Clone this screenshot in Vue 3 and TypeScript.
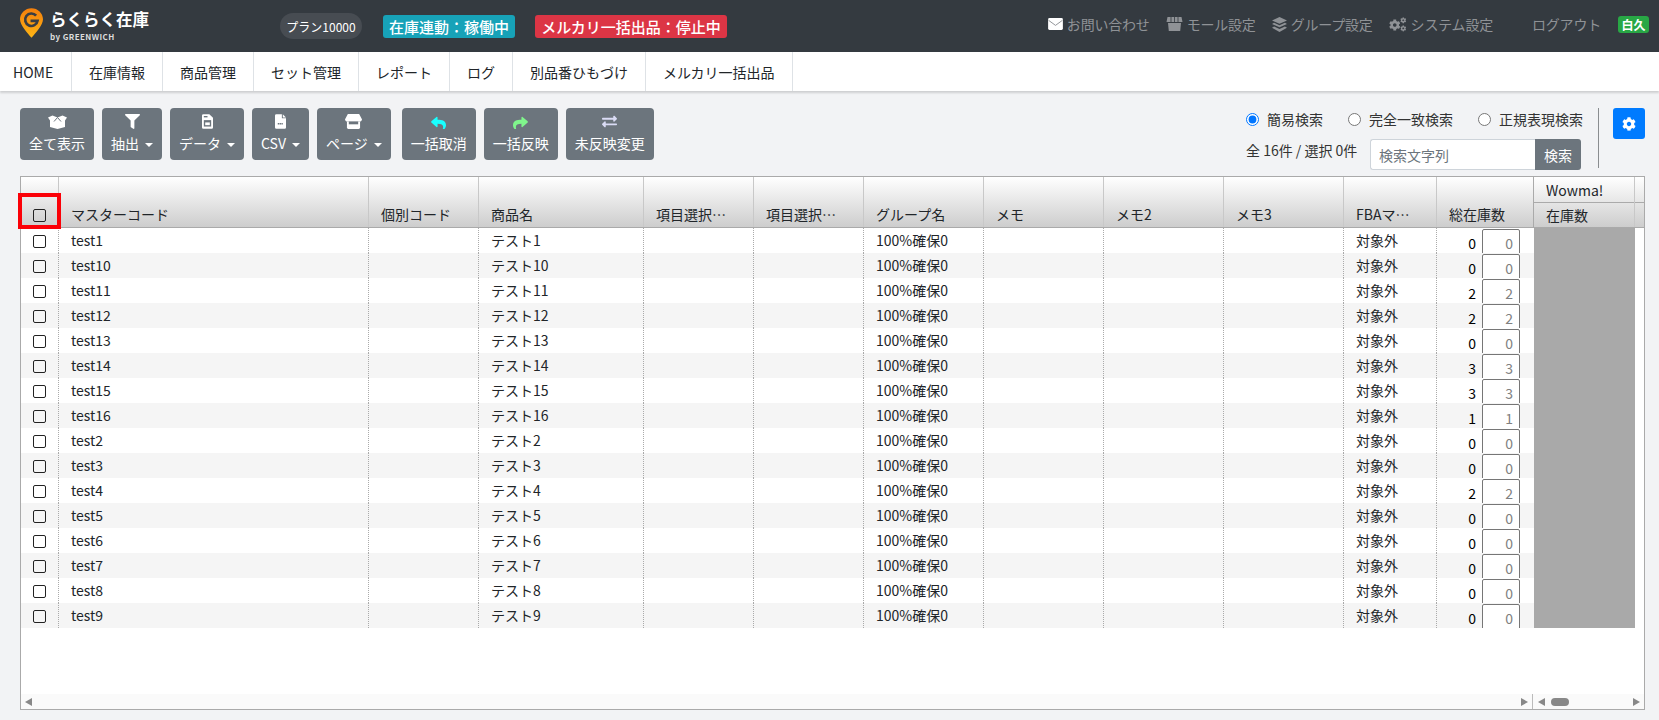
<script setup lang="ts">
const navItems = ['HOME', '在庫情報', '商品管理', 'セット管理', 'レポート', 'ログ', '別品番ひもづけ', 'メルカリ一括出品']
const filterPath = 'M487.976 0H24.028C2.71 0-8.047 25.866 7.058 40.971L192 225.941V432c0 7.831 3.821 15.17 10.237 19.662l80 55.98C298.02 518.69 320 507.493 320 487.98V225.941l184.947-184.97C520.021 25.896 509.338 0 487.976 0z'
const replyPath = 'M11.093 251.65l175.998-151.999C202.494 86.348 224 97.146 224 120v80.053c160.629 1.839 288 33.998 288 186.084 0 61.384-39.544 122.196-83.255 153.99-13.64 9.922-33.079-2.53-28.049-18.619 45.303-144.879-21.488-183.334-176.696-185.572V424c0 22.86-21.511 33.645-36.907 20.352l-176-152c-11.07-9.562-11.086-26.1 0-35.7z'
const exchangePath = 'M0 168v-16c0-13.255 10.745-24 24-24h360V80c0-21.367 25.899-32.042 40.971-16.971l80 80c9.372 9.373 9.372 24.569 0 33.941l-80 80C409.956 271.982 384 261.456 384 240v-48H24c-13.255 0-24-10.745-24-24zm488 152H128v-48c0-21.314-25.862-32.08-40.971-16.971l-80 80c-9.372 9.373-9.372 24.569 0 33.941l80 80C102.057 463.997 128 453.437 128 432v-48h360c13.255 0 24-10.745 24-24v-16c0-13.255-10.745-24-24-24z'
const cogPath = 'M487.4 315.7l-42.6-24.6c4.3-23.2 4.3-47 0-70.2l42.6-24.6c4.9-2.8 7.1-8.6 5.5-14-11.1-35.6-30-67.8-54.7-94.6-3.8-4.1-10-5.1-14.8-2.3L380.8 110c-17.9-15.4-38.5-27.3-60.8-35.1V25.8c0-5.6-3.9-10.5-9.4-11.7-36.7-8.2-74.3-7.8-109.2 0-5.5 1.2-9.4 6.1-9.4 11.7V75c-22.2 7.9-42.8 19.8-60.8 35.1L88.7 85.5c-4.9-2.8-11-1.9-14.8 2.3-24.7 26.7-43.6 58.9-54.7 94.6-1.7 5.4.6 11.2 5.5 14L67.3 221c-4.3 23.2-4.3 47 0 70.2l-42.6 24.6c-4.9 2.8-7.1 8.6-5.5 14 11.1 35.6 30 67.8 54.7 94.6 3.8 4.1 10 5.1 14.8 2.3l42.6-24.6c17.9 15.4 38.5 27.3 60.8 35.1v49.2c0 5.6 3.9 10.5 9.4 11.7 36.7 8.2 74.3 7.8 109.2 0 5.5-1.2 9.4-6.1 9.4-11.7v-49.2c22.2-7.9 42.8-19.8 60.8-35.1l42.6 24.6c4.9 2.8 11 1.9 14.8-2.3 24.7-26.7 43.6-58.9 54.7-94.6 1.5-5.5-.7-11.3-5.6-14.1zM256 336c-44.1 0-80-35.9-80-80s35.9-80 80-80 80 35.9 80 80-35.9 80-80 80z'

const rows: [string, number][] = [
  ['1', 0], ['10', 0], ['11', 2], ['12', 2], ['13', 0], ['14', 3], ['15', 3], ['16', 1],
  ['2', 0], ['3', 0], ['4', 2], ['5', 0], ['6', 0], ['7', 0], ['8', 0], ['9', 0],
]
const headCols = ['マスターコード', '個別コード', '商品名', '項目選択…', '項目選択…', 'グループ名', 'メモ', 'メモ2', 'メモ3', 'FBAマ…', '総在庫数']
</script>

<template>
  <div class="page">
    <header class="topbar">
      <div class="logo">
        <svg class="logo-pin" viewBox="0 0 24 31" width="23" height="30">
          <defs>
            <linearGradient id="pinGrad" x1="0" y1="0" x2="0" y2="1">
              <stop offset="0" stop-color="#f47f0c" />
              <stop offset="1" stop-color="#fdb515" />
            </linearGradient>
          </defs>
          <path d="M12 0C5.400 0 0 5.200 0 11.600 0 18 8 26 12 31c4-5 12-13 12-19.400C24 5.200 18.600 0 12 0z" fill="url(#pinGrad)" />
          <path d="M16.800 7.800A6.500 6.500 0 1 0 18.300 13.200H11" fill="none" stroke="#3a3d42" stroke-width="2.800" />
        </svg>
        <div class="logo-words">
          <div class="logo-name">らくらく在庫</div>
          <div class="logo-by">by GREENWICH</div>
        </div>
      </div>
      <span class="plan">プラン10000</span>
      <span class="state state-on">在庫連動：稼働中</span>
      <span class="state state-off">メルカリ一括出品：停止中</span>
      <nav class="toplinks">
        <a class="toplink">
          <svg viewBox="0 0 16 13" width="15" height="12">
            <rect width="16" height="13" rx="1.500" fill="#fff" />
            <path d="M0.500 2.500 8 8l7.500-5.500" fill="none" stroke="#8a8d91" stroke-width="1" />
          </svg>
          お問い合わせ
        </a>
        <a class="toplink">
          <svg viewBox="0 0 16 14" width="17" height="14" fill="#8f9296">
            <path d="M1 0h14l1 5H0zM1.500 6h13l-.8 8H2.300z" />
            <path d="M4.500 0v5M8 0v5M11.500 0v5" stroke="#343a40" stroke-width=".8" />
          </svg>
          モール設定
        </a>
        <a class="toplink">
          <svg viewBox="0 0 16 16" width="15" height="15" fill="#8f9296">
            <path d="M8 0l8 3.600-8 3.600L0 3.600z" />
            <path d="M2.200 6.200L8 8.800l5.800-2.600L16 7.500 8 11 0 7.500z" />
            <path d="M2.200 10.200L8 12.800l5.800-2.600 2.200 1.300L8 16l-8-4.500z" />
          </svg>
          グループ設定
        </a>
        <a class="toplink">
          <svg viewBox="0 0 640 512" width="18" height="15" fill="#8f9296">
            <path :d="cogPath" transform="translate(0 70) scale(.8)" />
            <path :d="cogPath" transform="translate(400 0) scale(.42)" />
            <path :d="cogPath" transform="translate(400 290) scale(.42)" />
          </svg>
          システム設定
        </a>
        <a class="toplink logout">ログアウト</a>
        <span class="hakkyu">白久</span>
      </nav>
    </header>

    <nav class="mainnav">
      <a v-for="item in navItems" :key="item" class="navitem">{{ item }}</a>
    </nav>

    <section class="toolbar">
      <div class="tools">
        <button class="tool">
          <svg viewBox="0 0 19 15" width="19" height="15">
            <path d="M0 3.500 4.500 1.500 9.500 3.500 14.500 1.500 19 3.500 17 6.500V13L9.500 15 2 13V6.500z" fill="#fff" />
            <path d="M6 7.500 9.500 3.500 13 7.500" fill="none" stroke="#6c757d" stroke-width="1" />
          </svg>
          <span class="tool-label">全て表示</span>
        </button>
        <button class="tool">
          <svg viewBox="0 0 512 512" width="15" height="15" fill="#fff"><path :d="filterPath" /></svg>
          <span class="tool-label">抽出<i class="caret"></i></span>
        </button>
        <button class="tool">
          <svg viewBox="0 0 12 16" width="11" height="15">
            <path d="M0 1.500A1.500 1.500 0 0 1 1.500 0H8l4 4v10.500a1.500 1.500 0 0 1-1.500 1.500h-9A1.500 1.500 0 0 1 0 14.500z" fill="#fff" />
            <rect x="2" y="2" width="4" height="1.500" fill="#6c757d" />
            <rect x="2" y="6.500" width="8" height="7" fill="#6c757d" />
            <rect x="3.500" y="9" width="5" height="3" fill="#fff" />
          </svg>
          <span class="tool-label">データ<i class="caret"></i></span>
        </button>
        <button class="tool">
          <svg viewBox="0 0 12 16" width="11" height="15">
            <path d="M0 1.500A1.500 1.500 0 0 1 1.500 0H7.500v4.500H12v10a1.500 1.500 0 0 1-1.500 1.500h-9A1.500 1.500 0 0 1 0 14.500z" fill="#fff" />
            <path d="M8.500 0 12 3.500H8.500z" fill="#fff" />
            <path d="M3 10.500h6" stroke="#6c757d" stroke-width="1.500" stroke-dasharray="1.500 .5" />
          </svg>
          <span class="tool-label">CSV<i class="caret"></i></span>
        </button>
        <button class="tool">
          <svg viewBox="0 0 18 16" width="17" height="15">
            <path d="M3 0h12l3 5.500C18 7 16.800 8 15.500 8h-13C1.200 8 0 7 0 5.500z" fill="#fff" />
            <path d="M2 8h14v6.500a1.500 1.500 0 0 1-1.500 1.500h-11A1.500 1.500 0 0 1 2 14.500z" fill="#fff" />
            <rect x="4" y="8" width="10" height="3" fill="#6c757d" />
          </svg>
          <span class="tool-label">ページ<i class="caret"></i></span>
        </button>
        <button class="tool tool-gap">
          <svg viewBox="0 0 512 512" width="15" height="15" fill="#18ffff"><path :d="replyPath" /></svg>
          <span class="tool-label">一括取消</span>
        </button>
        <button class="tool">
          <svg viewBox="0 0 512 512" width="15" height="15" fill="#80f58c"><path :d="replyPath" transform="matrix(-1 0 0 1 512 0)" /></svg>
          <span class="tool-label">一括反映</span>
        </button>
        <button class="tool">
          <svg viewBox="0 0 512 512" width="15" height="15" fill="#dadcf5"><path :d="exchangePath" /></svg>
          <span class="tool-label">未反映変更</span>
        </button>
      </div>

      <div class="search">
        <div class="radios">
          <label class="radio"><input type="radio" name="mode" checked />簡易検索</label>
          <label class="radio"><input type="radio" name="mode" />完全一致検索</label>
          <label class="radio"><input type="radio" name="mode" />正規表現検索</label>
        </div>
        <div class="search-line">
          <span class="count">全 16件 / 選択 0件</span>
          <div class="search-box">
            <input class="search-input" type="text" placeholder="検索文字列" />
            <button class="search-btn">検索</button>
          </div>
        </div>
      </div>
      <div class="setting-wrap">
        <button class="setting">
          <svg viewBox="0 0 512 512" width="14" height="14" fill="#fff"><path :d="cogPath" /></svg>
        </button>
      </div>
    </section>

    <section class="grid-box">
      <div class="head">
        <div class="hcell hcheck"><input type="checkbox" class="check" /></div>
        <div v-for="(label, i) in headCols" :key="i" class="hcell hspan">{{ label }}</div>
        <div class="hgroup">
          <div class="hgroup-top">Wowma!</div>
          <div class="hgroup-bottom">在庫数</div>
        </div>
        <div class="hgutter">
          <div class="hgutter-top"></div>
        </div>
      </div>

      <div class="body">
        <div v-for="([id, qty], i) in rows" :key="id" class="row" :class="{ alt: i % 2 === 1 }">
          <div class="cell ccheck"><input type="checkbox" class="check" /></div>
          <div class="cell">test{{ id }}</div>
          <div class="cell"></div>
          <div class="cell">テスト{{ id }}</div>
          <div class="cell"></div>
          <div class="cell"></div>
          <div class="cell">100%確保0</div>
          <div class="cell"></div>
          <div class="cell"></div>
          <div class="cell"></div>
          <div class="cell">対象外</div>
          <div class="cell cqty">
            <span class="qty">{{ qty }}</span>
            <span class="qty-input">{{ qty }}</span>
          </div>
          <div class="cell cgray"></div>
        </div>
      </div>

      <div class="scrollbars">
        <div class="sb-left">
          <i class="arrow arrow-l"></i>
          <i class="arrow arrow-r"></i>
        </div>
        <div class="sb-right">
          <i class="arrow arrow-l"></i>
          <i class="thumb"></i>
          <i class="arrow arrow-r"></i>
        </div>
      </div>

      <div class="marker"></div>
    </section>
  </div>
</template>

<style>
html, body { margin: 0; background: #f2f3f5; }
</style>

<style scoped>
.page {
  height: 720px;
  display: flex;
  flex-direction: column;
  background: #f2f3f5;
  color: #212529;
  font-family: "Noto Sans CJK JP", "Noto Sans", sans-serif;
  font-size: 14px;
  overflow: hidden;
}
.topbar {
  height: 52px;
  flex: none;
  display: flex;
  align-items: center;
  background: #343a40;
  padding-left: 20px;
  box-sizing: border-box;
}
.logo { display: flex; align-items: flex-start; width: 260px; height: 42px; padding-top: 3px; box-sizing: border-box; }
.logo-pin { display: block; }
.logo-words { margin-left: 7px; }
.logo-name { color: #fff; font-size: 16.5px; font-weight: 700; line-height: 20px; margin-top: 1px; }
.logo-by { color: #ddd; font-size: 8px; font-weight: 700; line-height: 10px; margin-top: 3px; letter-spacing: .4px; }
.plan {
  width: 82px; height: 26px; border-radius: 13px; background: #474c52; color: #fff;
  font-size: 12px; display: flex; align-items: center; justify-content: center;
}
.state {
  height: 23px; border-radius: 3px; color: #fff; font-size: 15px; display: flex;
  align-items: center; justify-content: center; font-weight: 500; white-space: nowrap;
}
.state-on { background: #17a2b8; width: 132px; margin-left: 21px; }
.state-off { background: #dc3545; width: 192px; margin-left: 20px; }
.toplinks { margin-left: auto; display: flex; align-items: center; padding-right: 10px; height: 100%; padding-bottom: 4px; box-sizing: border-box; }
.toplink { color: #8f9296; font-size: 14px; letter-spacing: -.2px; display: flex; align-items: center; gap: 4px; margin-left: 16px; white-space: nowrap; }
.logout { margin-left: 39px; }
.hakkyu {
  width: 31px; height: 17px; background: #28a745; color: #fff; font-size: 12px; font-weight: 700;
  border-radius: 3px; display: flex; align-items: center; justify-content: center; margin-left: 17px;
}
.mainnav {
  height: 39px;
  flex: none;
  display: flex;
  background: #fff;
  box-shadow: 0 2px 2px rgba(0, 0, 0, .15);
  position: relative;
}
.navitem {
  display: flex; align-items: center; padding: 0 17px; border-right: 1px solid #dee2e6;
  white-space: nowrap; color: #212529;
}
.navitem:first-child { width: 72px; box-sizing: border-box; padding: 0 0 0 13px; }
.toolbar {
  height: 85px;
  flex: none;
  display: flex;
  padding: 17px 14px 0 20px;
  box-sizing: border-box;
}
.tools { display: flex; gap: 8px; align-items: flex-start; }
.tool {
  height: 52px; padding: 6px 9px 0; background: #6c757d; border: 0; border-radius: 4px; color: #fff;
  display: flex; flex-direction: column; align-items: center; font: inherit; font-size: 14px;
  box-sizing: border-box; white-space: nowrap;
}
.tool svg { display: block; }
.tool-label { line-height: 20px; margin-top: 4px; }
.tool-gap { margin-left: 3px; }
.caret {
  display: inline-block; margin-left: 6px; vertical-align: 2px;
  border-top: 4.500px solid #fff; border-left: 4.500px solid transparent; border-right: 4.500px solid transparent;
}
.search { margin-left: auto; width: 336px; display: flex; flex-direction: column; }
.radios { display: flex; height: 22px; align-items: center; }
.radio { display: flex; align-items: center; margin-right: 25px; white-space: nowrap; color: #333; }
.radio:last-child { margin-right: 0; }
.radio input { margin: 0 8px 0 0; width: 13px; height: 13px; }
.search-line { display: flex; align-items: flex-start; margin-top: 9px; }
.count { width: 124px; flex: none; line-height: 20px; padding-top: 1px; color: #333; }
.search-box { display: flex; height: 31px; }
.search-input {
  width: 165px; box-sizing: border-box; border: 1px solid #ced4da; border-right: 0; border-radius: 3px 0 0 3px;
  background: #fff; padding: 0 8px; font: inherit; font-size: 14px; outline: none;
}
.search-input::placeholder { color: #6c757d; }
.search-btn {
  width: 46px; background: #6c757d; color: #fff; border: 0; border-radius: 0 3px 3px 0; font: inherit; font-size: 14px; padding: 0;
}
.setting-wrap { width: 47px; height: 60px; margin-left: 16px; border-left: 1px solid #8a8d90; display: flex; justify-content: flex-end; box-sizing: border-box; }
.setting {
  width: 32px; height: 31px; background: #007bff; border: 0; border-radius: 3px; display: flex;
  align-items: center; justify-content: center; padding: 0;
}
.grid-box {
  position: relative;
  margin: 0 14px 0 20px;
  height: 534px;
  box-sizing: border-box;
  background: #fff;
  border: 1px solid #aaa;
  display: flex;
  flex-direction: column;
}
.head {
  flex: none;
  height: 50px;
  display: flex;
  background: linear-gradient(#fff, #cdcdcd);
  border-bottom: 1px solid #aaa;
}
.hcell { box-sizing: border-box; border-right: 1px solid #c8c8c8; padding: 0 0 2px 12px; display: flex; align-items: flex-end; white-space: nowrap; line-height: 22px; }
.hspan:nth-child(2) { width: 310px; }
.hspan:nth-child(3) { width: 110px; }
.hspan:nth-child(4) { width: 165px; }
.hspan:nth-child(5) { width: 110px; }
.hspan:nth-child(6) { width: 110px; }
.hspan:nth-child(7) { width: 120px; }
.hspan:nth-child(8) { width: 120px; }
.hspan:nth-child(9) { width: 120px; }
.hspan:nth-child(10) { width: 120px; }
.hspan:nth-child(11) { width: 93px; }
.hspan:nth-child(12) { width: 97px; border-right-color: #aaa; }
.hcheck { width: 38px; padding: 0 0 5px; justify-content: center; align-items: flex-end; }
.hgroup { width: 101px; box-sizing: border-box; border-right: 1px solid #c8c8c8; display: flex; flex-direction: column; }
.hgroup-top { height: 25px; border-bottom: 1px solid #aaa; padding-left: 12px; line-height: 26px; }
.hgroup-bottom { flex: 1; padding-left: 12px; line-height: 24px; }
.hgutter { flex: 1; }
.hgutter-top { height: 25px; border-bottom: 1px solid #aaa; }
.body { flex: 1; min-height: 0; overflow: hidden; }
.row { display: flex; width: 1614px; height: 25px; background: #fff; }
.row.alt { background: #f5f5f5; }
.cell { box-sizing: border-box; border-right: 1px dotted #aaa; padding: 0 0 0 12px; line-height: 25px; white-space: nowrap; overflow: hidden; color: #212529; }
.cell:nth-child(1) { width: 38px; padding: 1px 0 0; display: flex; align-items: center; justify-content: center; }
.cell:nth-child(2) { width: 310px; }
.cell:nth-child(3) { width: 110px; }
.cell:nth-child(4) { width: 165px; }
.cell:nth-child(5) { width: 110px; }
.cell:nth-child(6) { width: 110px; }
.cell:nth-child(7) { width: 120px; }
.cell:nth-child(8) { width: 120px; }
.cell:nth-child(9) { width: 120px; }
.cell:nth-child(10) { width: 120px; }
.cell:nth-child(11) { width: 93px; }
.cell:nth-child(12) { width: 97px; border-right: 0; }
.cgray { width: 101px; background: #a9a9a9; border-right: 0; padding: 0; }
.cqty { display: flex; justify-content: flex-end; padding: 1px 14px 0 0; }
.qty { line-height: 28px; margin-right: 6px; color: #000; }
.qty-input {
  width: 38px; height: 30px; flex: none; box-sizing: border-box; background: #fff; border: 1px solid #767676;
  border-radius: 2px; text-align: right; padding-right: 6px; line-height: 26px; color: #808080;
}
.check {
  appearance: none; width: 13px; height: 13px; margin: 0; display: block; box-sizing: border-box;
  border: 1px solid #222; border-radius: 2px; background: transparent;
}
.scrollbars { flex: none; height: 15px; display: flex; background: #fafafa; }
.sb-left { width: 1512px; box-sizing: border-box; border-right: 1px solid #bbb; display: flex; align-items: center; justify-content: space-between; padding: 0 4px; }
.sb-right { flex: 1; display: flex; align-items: center; padding: 0 4px 0 5px; }
.arrow { display: block; border-top: 4px solid transparent; border-bottom: 4px solid transparent; }
.arrow-l { border-right: 7px solid #888; }
.arrow-r { border-left: 7px solid #888; }
.sb-right .arrow-r { margin-left: auto; }
.thumb { display: block; width: 18px; height: 8px; border-radius: 4px; background: #888; margin-left: 6px; }
.marker {
  position: absolute; left: -3px; top: 16px; width: 43px; height: 36px; box-sizing: border-box;
  border: 4px solid #fb0007; pointer-events: none;
}
</style>
